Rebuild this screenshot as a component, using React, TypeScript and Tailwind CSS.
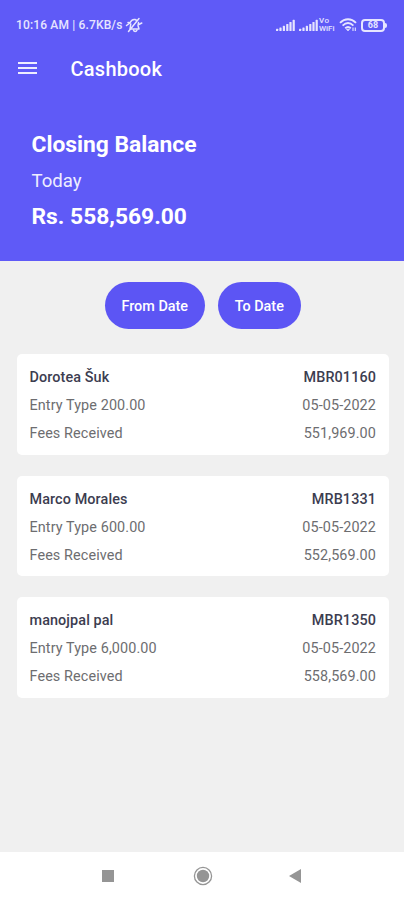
const entries = [
  { name: "Dorotea Šuk", code: "MBR01160", type: "Entry Type 200.00", date: "05-05-2022", label: "Fees Received", amount: "551,969.00" },
  { name: "Marco Morales", code: "MRB1331", type: "Entry Type 600.00", date: "05-05-2022", label: "Fees Received", amount: "552,569.00" },
  { name: "manojpal pal", code: "MBR1350", type: "Entry Type 6,000.00", date: "05-05-2022", label: "Fees Received", amount: "558,569.00" },
];

function Signal() {
  return (
    <svg className="shrink-0" width="20" height="12" viewBox="0 0 20 12" fill="#e6e5ff">
      <rect x="0" y="9.7" width="2.2" height="2.3" rx=".6" />
      <rect x="3.4" y="8.5" width="2.2" height="3.5" rx=".6" />
      <rect x="6.8" y="6.8" width="2.2" height="5.2" rx=".6" />
      <rect x="10.2" y="5" width="2.2" height="7" rx=".6" />
      <rect x="13.4" y="3" width="2.2" height="9" rx=".6" />
      <rect x="16.6" y="0.8" width="2.2" height="11.2" rx=".6" />
    </svg>
  );
}

function MutedBell() {
  return (
    <svg width="18" height="16" viewBox="0 0 18 16" fill="none" stroke="#e6e5ff" strokeWidth="1.5" strokeLinecap="round" strokeLinejoin="round">
      <path d="M1.5 8.5 L5 5.8 C6 3.5 8 2.2 10 2.5 L11.5 3.2" />
      <path d="M3 5.5 L5 5.8" />
      <path d="M5.8 7 L5 12 H7.5" />
      <path d="M3.5 14.5 L14 1.5" />
      <path d="M13.5 5.5 L13 8.5 L14 12 H8.5" />
      <path d="M8.5 13 C9 15 11.3 15 12 13" />
      <path d="M13.8 7.5 L16.8 6" />
    </svg>
  );
}

function StatusBar() {
  return (
    <div className="flex h-[50px] items-center justify-between pl-4 pr-[17px] text-[#e6e5ff]">
      <div className="flex items-center gap-[2px]">
        <span className="text-[12px] font-medium tracking-[0.15px]">10:16 AM | 6.7KB/s</span>
        <MutedBell />
      </div>
      <div className="flex items-center">
        <Signal />
        <span className="w-[3px]" />
        <Signal />
        <span className="flex w-[18px] flex-col text-[8px] font-medium leading-[8px]">
          <span className="tracking-[0.5px]">Vo</span>
          <span>WiFi</span>
        </span>
        <svg className="ml-[2px]" width="19" height="14" viewBox="0 0 19 14" fill="none" stroke="#e6e5ff" strokeWidth="1.9">
          <path d="M1 4.8 C5.8 0 12.2 0 17 4.8" />
          <path d="M3.6 7.6 C7 4.3 11 4.3 14.4 7.6" />
          <path d="M6.2 10.2 C8 8.6 10 8.6 11.8 10.2" />
          <path d="M7.4 11.2 L9 13 L10.6 11.2 Z" fill="#e6e5ff" strokeWidth=".6" />
          <path d="M14 9.5 V13 M16.3 9.5 V13" strokeWidth="1.1" />
        </svg>
        <span className="ml-[3px] flex h-[13px] w-[24px] items-center justify-center rounded-[4px] border-2 border-[#e6e5ff] text-[9px] font-bold leading-none">68</span>
        <span className="h-[5px] w-[2px] rounded-r-[2px] bg-[#e6e5ff]" />
      </div>
    </div>
  );
}

export default function App() {
  return (
    <div className="flex h-[900px] w-[404px] flex-col overflow-hidden bg-[#f0f0f0] font-['Roboto',sans-serif]">
      <header className="h-[261px] shrink-0 bg-[#5f5af7] text-white">
        <StatusBar />
        <div className="flex h-[38px] items-center pl-[18px]">
          <div className="flex w-[19px] flex-col gap-[3px] pb-[2px]">
            <span className="h-[2px] bg-[#eeedff]" />
            <span className="h-[2px] bg-[#eeedff]" />
            <span className="h-[2px] bg-[#eeedff]" />
          </div>
          <h1 className="ml-[33.5px] text-[20px] font-medium leading-none tracking-[0.25px]">Cashbook</h1>
        </div>
        <div className="pl-[31.5px] pt-[39px]">
          <p className="text-[22.8px] font-bold leading-[36px]">Closing Balance</p>
          <p className="text-[18.6px] leading-[36px] text-[#eeedff]">Today</p>
          <p className="text-[22.8px] font-bold leading-[36px]">Rs. 558,569.00</p>
        </div>
      </header>
      <main className="flex-1 pl-[16.5px] pr-[15px] pt-[21px]">
        <div className="flex justify-center gap-[13px] text-[14.4px] font-medium text-white">
          <button className="h-[47px] w-[100px] rounded-full bg-[#5c55f4] pt-[2px]">From Date</button>
          <button className="h-[47px] w-[83px] rounded-full bg-[#5c55f4] pt-[2px]">To Date</button>
        </div>
        <div className="mt-[25px] flex flex-col gap-[21px]">
          {entries.map((e) => (
            <section key={e.code} className="h-[100.5px] rounded-[5px] bg-white px-[13px] pt-[10px] text-[14.4px] leading-[28px] tracking-[0.1px] text-[#6d6d70]">
              <div className="flex justify-between font-medium text-[#3c3d50]">
                <span>{e.name}</span>
                <span>{e.code}</span>
              </div>
              <div className="flex justify-between">
                <span>{e.type}</span>
                <span>{e.date}</span>
              </div>
              <div className="flex justify-between">
                <span>{e.label}</span>
                <span>{e.amount}</span>
              </div>
            </section>
          ))}
        </div>
      </main>
      <nav className="flex h-[48px] shrink-0 items-center bg-white pl-[102px]">
        <span className="h-[12px] w-[12px] bg-[#959595]" />
        <svg className="ml-[79px]" width="20" height="20" viewBox="0 0 20 20">
          <circle cx="10" cy="10" r="8.6" fill="none" stroke="#959595" strokeWidth="1.3" />
          <circle cx="10" cy="10" r="6.2" fill="#959595" />
        </svg>
        <svg className="ml-[76px]" width="12" height="14" viewBox="0 0 12 14">
          <path d="M0 7 L12 0 V14 Z" fill="#959595" />
        </svg>
      </nav>
    </div>
  );
}
